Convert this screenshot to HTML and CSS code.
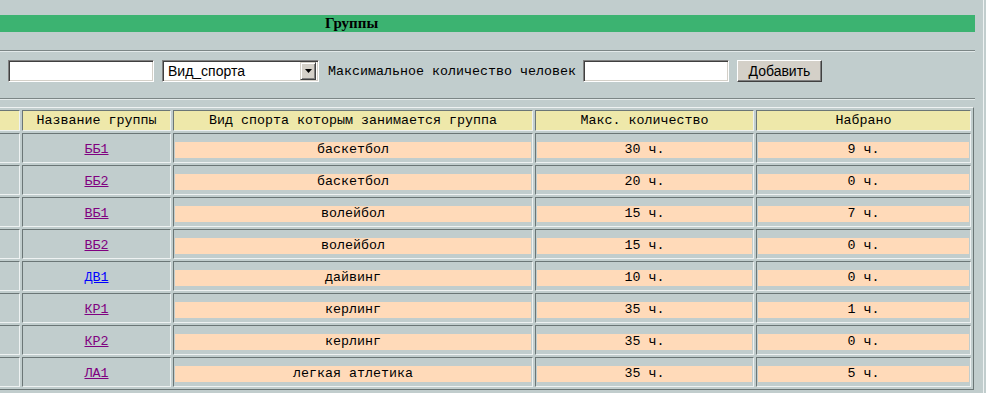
FILE: index.html
```html
<!DOCTYPE html>
<html lang="ru">
<head>
    <meta charset="UTF-8">
    <title>Группы</title>
    <link rel="stylesheet" href="styles.css">
</head>
<body>
    <div class="frame">
        <div class="page">
            <div class="title">Группы</div>
            <hr class="rule">
            <form class="add-form">
                <input type="text" class="field">
                <div class="select-box">
                    <span class="select-value">Вид_спорта</span>
                    <span class="select-btn">
                        <svg width="7" height="4" viewBox="0 0 7 4"><polygon points="0,0 7,0 3.5,4" fill="#000"/></svg>
                    </span>
                </div>
                <span class="label">Максимальное количество человек</span>
                <input type="text" class="field">
                <button type="button" class="btn">Добавить</button>
            </form>
            <hr class="rule rule-low">
            <table class="groups">
                <thead>
                    <tr>
                        <th class="col-check"></th>
                        <th class="col-name">Название группы</th>
                        <th class="col-sport">Вид спорта которым занимается группа</th>
                        <th class="col-max">Макс. количество</th>
                        <th class="col-count">Набрано</th>
                    </tr>
                </thead>
                <tbody>
                    <tr>
                        <td></td>
                        <td><div class="cell-link"><a href="#">ББ1</a></div></td>
                        <td><div class="cell-value">баскетбол</div></td>
                        <td><div class="cell-value">30 ч.</div></td>
                        <td><div class="cell-value">9 ч.</div></td>
                    </tr>
                    <tr>
                        <td></td>
                        <td><div class="cell-link"><a href="#">ББ2</a></div></td>
                        <td><div class="cell-value">баскетбол</div></td>
                        <td><div class="cell-value">20 ч.</div></td>
                        <td><div class="cell-value">0 ч.</div></td>
                    </tr>
                    <tr>
                        <td></td>
                        <td><div class="cell-link"><a href="#">ВБ1</a></div></td>
                        <td><div class="cell-value">волейбол</div></td>
                        <td><div class="cell-value">15 ч.</div></td>
                        <td><div class="cell-value">7 ч.</div></td>
                    </tr>
                    <tr>
                        <td></td>
                        <td><div class="cell-link"><a href="#">ВБ2</a></div></td>
                        <td><div class="cell-value">волейбол</div></td>
                        <td><div class="cell-value">15 ч.</div></td>
                        <td><div class="cell-value">0 ч.</div></td>
                    </tr>
                    <tr>
                        <td></td>
                        <td><div class="cell-link"><a href="#" class="new">ДВ1</a></div></td>
                        <td><div class="cell-value">дайвинг</div></td>
                        <td><div class="cell-value">10 ч.</div></td>
                        <td><div class="cell-value">0 ч.</div></td>
                    </tr>
                    <tr>
                        <td></td>
                        <td><div class="cell-link"><a href="#">КР1</a></div></td>
                        <td><div class="cell-value">керлинг</div></td>
                        <td><div class="cell-value">35 ч.</div></td>
                        <td><div class="cell-value">1 ч.</div></td>
                    </tr>
                    <tr>
                        <td></td>
                        <td><div class="cell-link"><a href="#">КР2</a></div></td>
                        <td><div class="cell-value">керлинг</div></td>
                        <td><div class="cell-value">35 ч.</div></td>
                        <td><div class="cell-value">0 ч.</div></td>
                    </tr>
                    <tr>
                        <td></td>
                        <td><div class="cell-link"><a href="#">ЛА1</a></div></td>
                        <td><div class="cell-value">легкая атлетика</div></td>
                        <td><div class="cell-value">35 ч.</div></td>
                        <td><div class="cell-value">5 ч.</div></td>
                    </tr>
                </tbody>
            </table>
        </div>
    </div>
</body>
</html>
```

FILE: styles.css
```css
* {
    box-sizing: border-box;
}

body {
    margin: 0;
    background: #c1cdcd;
    font-family: "Liberation Mono", "Courier New", monospace;
    font-size: 13.33px;
    color: #000;
    overflow: hidden;
}

.frame {
    width: 984px;
    height: 393px;
    padding-top: 15px;
    border-right: 1px solid #eef2f2;
    overflow: hidden;
}

.page {
    width: 975px;
}

.title {
    height: 17px;
    padding-right: 272px;
    background: #3cb371;
    font: bold 15px "Liberation Serif", "Times New Roman", serif;
    line-height: 17px;
    text-align: center;
}

.rule {
    height: 2px;
    margin: 18px 0 0;
    border: 0;
    border-top: 1px solid #7c8686;
    border-bottom: 1px solid #e2e9e9;
}

.rule-low {
    margin-top: 16px;
}

.add-form {
    display: flex;
    align-items: center;
    gap: 8px;
    height: 22px;
    margin: 8px 0 0;
    padding-left: 8px;
}

.field {
    width: 146px;
    height: 22px;
    margin: 0;
    padding: 0 3px;
    border: 1px solid;
    border-color: #808080 #fff #fff #808080;
    box-shadow: inset 1px 1px #404040, inset -1px -1px #d4d0c8;
    background: #fff;
    font: 14px "Liberation Sans", Arial, sans-serif;
}

.select-box {
    display: flex;
    align-items: center;
    width: 157px;
    height: 22px;
    padding: 2px;
    border: 1px solid;
    border-color: #808080 #fff #fff #808080;
    box-shadow: inset 1px 1px #404040, inset -1px -1px #d4d0c8;
    background: #fff;
    font: 14px "Liberation Sans", Arial, sans-serif;
}

.select-value {
    flex: 1;
    padding-left: 3px;
}

.select-btn {
    display: flex;
    align-items: center;
    justify-content: center;
    width: 16px;
    height: 18px;
    background: #d4d0c8;
    border: 1px solid;
    border-color: #d4d0c8 #404040 #404040 #d4d0c8;
    box-shadow: inset 1px 1px #fff, inset -1px -1px #808080;
}

.label {
    margin: 0 -1px 0 1px;
    white-space: nowrap;
}

.btn {
    width: 85px;
    height: 22px;
    margin: 0;
    padding: 0;
    border: 1px solid;
    border-color: #fff #404040 #404040 #fff;
    box-shadow: inset -1px -1px #808080, inset 1px 1px #d4d0c8;
    background: #d4d0c8;
    color: #000;
    font: 14px "Liberation Sans", Arial, sans-serif;
}

.groups {
    width: 1019px;
    margin: 7px 0 0 -45px;
    table-layout: fixed;
    border-collapse: separate;
    border-spacing: 2px;
    border: 1px solid;
    border-color: #eef2f2 #6b7676 #6b7676 #eef2f2;
}

.groups th,
.groups td {
    border: 1px solid;
    border-color: #6b7676 #eef2f2 #eef2f2 #6b7676;
}

.groups th {
    height: 21px;
    padding: 0;
    background: #eee8aa;
    font-weight: normal;
    line-height: 19px;
    text-align: center;
    white-space: nowrap;
}

.groups td {
    height: 30px;
    padding: 8px 1px 4px;
    vertical-align: top;
}

.col-check { width: 62px; }
.col-name { width: 149px; }
.col-sport { width: 360px; }
.col-max { width: 219px; }
.col-count { width: 215px; }

.cell-value,
.cell-link {
    height: 16px;
    line-height: 16px;
    text-align: center;
    white-space: nowrap;
}

.cell-value {
    background: #ffdab9;
}

.cell-link a {
    color: #800080;
}

.cell-link a.new {
    color: #0000ff;
}
```
